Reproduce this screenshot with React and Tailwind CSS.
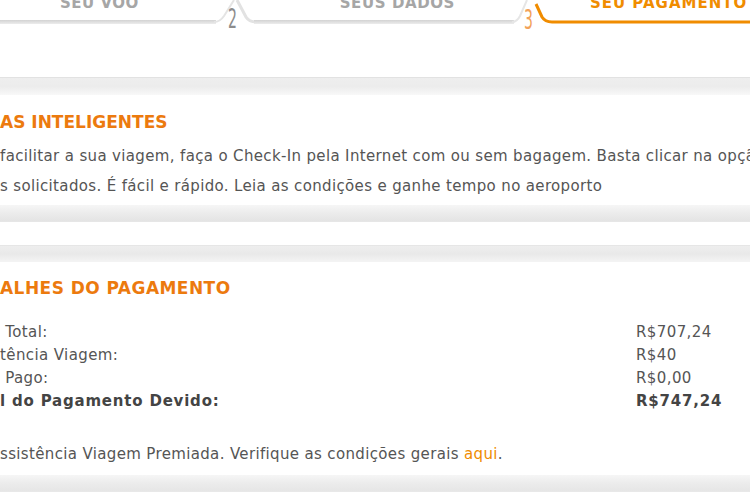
export default function App() {
  const font = { fontFamily: '"DejaVu Sans", Verdana, sans-serif' };
  const cond = { fontFamily: '"DejaVu Sans Condensed", "DejaVu Sans", sans-serif' };
  return (
    <div className="w-[750px] h-[500px] overflow-hidden bg-white relative" style={font}>
      {/* step bar */}
      <div className="relative h-[77px]">
        <svg className="absolute left-0 top-0" width="750" height="40" viewBox="0 0 750 40">
          <defs>
            <linearGradient id="g1" x1="0" y1="0" x2="0" y2="1">
              <stop offset="0" stopColor="#d2d2d2" />
              <stop offset="1" stopColor="#ececec" />
            </linearGradient>
          </defs>
          <rect x="0" y="20" width="216" height="4" fill="url(#g1)" />
          <path d="M214 22 Q220 22 224 16 L234 0" stroke="#e4e4e4" strokeWidth="2" fill="none" />
          <path d="M237 0 L246 17 Q249 22 256 22" stroke="#e2e2e2" strokeWidth="3" fill="none" />
          <rect x="254" y="20" width="260" height="4" fill="url(#g1)" />
          <path d="M512 22 Q517 22 520 16 L527 0" stroke="#e6e6e6" strokeWidth="2" fill="none" />
          <path d="M536 4 L542 17 Q545 22 552 22 L750 22" stroke="#f08c00" strokeWidth="3" fill="none" />
        </svg>
        <div className="relative flex h-[40px] items-start">
          <div className="ml-[60px] -mt-[8px] text-[15px] font-bold text-[#a6a6a6] tracking-[0.5px] whitespace-nowrap">SEU VOO</div>
          <div className="ml-[86px] mt-[5px] text-[26px] leading-[28px] text-[#8c8c8c] scale-x-[0.6]" style={cond}>2</div>
          <div className="ml-[100px] -mt-[8px] text-[15px] font-bold text-[#a6a6a6] tracking-[0.6px] whitespace-nowrap">SEUS DADOS</div>
          <div className="ml-[66px] mt-[6px] text-[26px] leading-[28px] text-[#f2a25a] scale-x-[0.6]" style={cond}>3</div>
          <div className="ml-[54px] -mt-[8px] text-[15px] font-bold text-[#f08c00] tracking-[1px] whitespace-nowrap">SEU PAGAMENTO</div>
        </div>
      </div>

      {/* band */}
      <div className="h-[18px] border-t border-[#e2e2e2] bg-gradient-to-b from-[#eeeeee] via-[#ececec] to-[#f8f8f8]" />

      {/* section 1 */}
      <div className="h-[110px] pt-[16px]">
        <div className="text-[17px] font-bold text-[#ec7a0e] leading-[22px] whitespace-nowrap">AS INTELIGENTES</div>
        <div className="mt-[8px] text-[15px] tracking-[0.35px] leading-[30px] text-[#555] whitespace-nowrap">
          <div>facilitar a sua viagem, faça o Check-In pela Internet com ou sem bagagem. Basta clicar na opção</div>
          <div>s solicitados. É fácil e rápido. Leia as condições e ganhe tempo no aeroporto</div>
        </div>
      </div>

      <div className="h-[17px] bg-gradient-to-b from-[#f6f6f6] via-[#ececec] to-[#e4e4e4] border-b border-[#e6e6e6]" />
      <div className="h-[23px]" />
      <div className="h-[17px] border-t border-[#e6e6e6] bg-gradient-to-b from-[#eeeeee] via-[#e9e9e9] to-[#f4f4f4]" />

      {/* section 2 */}
      <div className="h-[213px] pt-[15px]">
        <div className="text-[17px] font-bold text-[#ec7a0e] leading-[22px] tracking-[0.45px] whitespace-nowrap">ALHES DO PAGAMENTO</div>
        <div className="mt-[22px] text-[15px] tracking-[0.4px] leading-[23px] text-[#555]">
          <div className="flex"><span className="w-[636px]">&nbsp;Total:</span><span>R$707,24</span></div>
          <div className="flex"><span className="w-[636px]">tência Viagem:</span><span>R$40</span></div>
          <div className="flex"><span className="w-[636px]">&nbsp;Pago:</span><span>R$0,00</span></div>
          <div className="flex font-bold text-[#444] tracking-[0.8px]"><span className="w-[636px]">l do Pagamento Devido:</span><span>R$747,24</span></div>
        </div>
        <div className="mt-[30px] text-[15px] tracking-[0.35px] leading-[23px] text-[#555] whitespace-nowrap">
          ssistência Viagem Premiada. Verifique as condições gerais <span className="text-[#f08c00]">aqui</span>.
        </div>
      </div>

      <div className="h-[17px] bg-gradient-to-b from-[#f6f6f6] via-[#ececec] to-[#e6e6e6] border-b border-[#e8e8e8]" />
    </div>
  );
}
